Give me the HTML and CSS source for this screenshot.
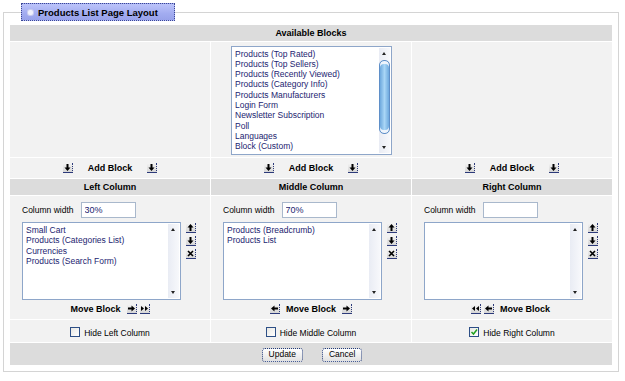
FILE: index.html
```html
<!DOCTYPE html>
<html lang="en">
    <head>
        <meta charset="UTF-8" />
        <title>Products List Page Layout</title>
        <link rel="stylesheet" href="styles.css">
    </head>
    <body>
        <fieldset class="layout-box">
            <legend><span class="bullet"></span>Products List Page Layout</legend>

            <div class="layout-grid">
                <!-- Available blocks -->
                <div class="head span-3">Available Blocks</div>
                <div class="cell"></div>
                <div class="cell avail">
                    <div class="listbox avail-list">
                        <div class="options">
                            <div>Products (Top Rated)</div>
                            <div>Products (Top Sellers)</div>
                            <div>Products (Recently Viewed)</div>
                            <div>Products (Category Info)</div>
                            <div>Products Manufacturers</div>
                            <div>Login Form</div>
                            <div>Newsletter Subscription</div>
                            <div>Poll</div>
                            <div>Languages</div>
                            <div>Block (Custom)</div>
                        </div>
                        <div class="scrollbar">
                            <span class="sb-btn sb-up"></span>
                            <span class="sb-track"><span class="sb-thumb"></span></span>
                            <span class="sb-btn sb-down"></span>
                        </div>
                    </div>
                </div>
                <div class="cell"></div>

                <!-- Add block row -->
                <div class="cell add-row">
                    <span class="ibtn"><svg viewBox="0 0 9 9"><path d="M3.5 1h2v3.5h2l-3 3.5-3-3.5h2z"/></svg></span>
                    <b>Add Block</b>
                    <span class="ibtn"><svg viewBox="0 0 9 9"><path d="M3.5 1h2v3.5h2l-3 3.5-3-3.5h2z"/></svg></span>
                </div>
                <div class="cell add-row">
                    <span class="ibtn"><svg viewBox="0 0 9 9"><path d="M3.5 1h2v3.5h2l-3 3.5-3-3.5h2z"/></svg></span>
                    <b>Add Block</b>
                    <span class="ibtn"><svg viewBox="0 0 9 9"><path d="M3.5 1h2v3.5h2l-3 3.5-3-3.5h2z"/></svg></span>
                </div>
                <div class="cell add-row">
                    <span class="ibtn"><svg viewBox="0 0 9 9"><path d="M3.5 1h2v3.5h2l-3 3.5-3-3.5h2z"/></svg></span>
                    <b>Add Block</b>
                    <span class="ibtn"><svg viewBox="0 0 9 9"><path d="M3.5 1h2v3.5h2l-3 3.5-3-3.5h2z"/></svg></span>
                </div>

                <!-- Column headers -->
                <div class="head">Left Column</div>
                <div class="head">Middle Column</div>
                <div class="head">Right Column</div>

                <!-- Left column -->
                <div class="cell column">
                    <div class="col-inner">
                        <div class="width-row">
                            <label>Column width</label>
                            <input type="text" class="width-input" value="30%">
                        </div>
                        <div class="list-row">
                            <div class="listbox col-list">
                                <div class="options">
                                    <div>Small Cart</div>
                                    <div>Products (Categories List)</div>
                                    <div>Currencies</div>
                                    <div>Products (Search Form)</div>
                                </div>
                                <div class="scrollbar">
                                    <span class="sb-btn sb-up"></span>
                                    <span class="sb-track"></span>
                                    <span class="sb-btn sb-down"></span>
                                </div>
                            </div>
                            <div class="side-btns">
                                <span class="ibtn"><svg viewBox="0 0 9 9"><path d="M4.5 1l3 3.5h-2V8h-2V4.5h-2z"/></svg></span>
                                <span class="ibtn"><svg viewBox="0 0 9 9"><path d="M3.5 1h2v3.5h2l-3 3.5-3-3.5h2z"/></svg></span>
                                <span class="ibtn"><svg viewBox="0 0 9 9"><path class="cross" d="M2 2l5 5M7 2l-5 5"/></svg></span>
                            </div>
                        </div>
                    </div>
                    <div class="move-row">
                        <b>Move Block</b>
                        <span class="ibtn"><svg viewBox="0 0 9 9"><path d="M1 3.5h3.5v-2l3.5 3-3.5 3v-2H1z"/></svg></span>
                        <span class="ibtn tight"><svg viewBox="0 0 9 9"><path d="M1 2l3 2.5L1 7zM5 2l3 2.5L5 7z"/></svg></span>
                    </div>
                </div>

                <!-- Middle column -->
                <div class="cell column">
                    <div class="col-inner">
                        <div class="width-row">
                            <label>Column width</label>
                            <input type="text" class="width-input" value="70%">
                        </div>
                        <div class="list-row">
                            <div class="listbox col-list">
                                <div class="options">
                                    <div>Products (Breadcrumb)</div>
                                    <div>Products List</div>
                                </div>
                                <div class="scrollbar">
                                    <span class="sb-btn sb-up"></span>
                                    <span class="sb-track"></span>
                                    <span class="sb-btn sb-down"></span>
                                </div>
                            </div>
                            <div class="side-btns">
                                <span class="ibtn"><svg viewBox="0 0 9 9"><path d="M4.5 1l3 3.5h-2V8h-2V4.5h-2z"/></svg></span>
                                <span class="ibtn"><svg viewBox="0 0 9 9"><path d="M3.5 1h2v3.5h2l-3 3.5-3-3.5h2z"/></svg></span>
                                <span class="ibtn"><svg viewBox="0 0 9 9"><path class="cross" d="M2 2l5 5M7 2l-5 5"/></svg></span>
                            </div>
                        </div>
                    </div>
                    <div class="move-row">
                        <span class="ibtn"><svg viewBox="0 0 9 9"><path d="M8 3.5H4.5v-2L1 4.5l3.5 3v-2H8z"/></svg></span>
                        <b>Move Block</b>
                        <span class="ibtn"><svg viewBox="0 0 9 9"><path d="M1 3.5h3.5v-2l3.5 3-3.5 3v-2H1z"/></svg></span>
                    </div>
                </div>

                <!-- Right column -->
                <div class="cell column">
                    <div class="col-inner">
                        <div class="width-row">
                            <label>Column width</label>
                            <input type="text" class="width-input" value="">
                        </div>
                        <div class="list-row">
                            <div class="listbox col-list">
                                <div class="options"></div>
                                <div class="scrollbar">
                                    <span class="sb-btn sb-up"></span>
                                    <span class="sb-track"></span>
                                    <span class="sb-btn sb-down"></span>
                                </div>
                            </div>
                            <div class="side-btns">
                                <span class="ibtn"><svg viewBox="0 0 9 9"><path d="M4.5 1l3 3.5h-2V8h-2V4.5h-2z"/></svg></span>
                                <span class="ibtn"><svg viewBox="0 0 9 9"><path d="M3.5 1h2v3.5h2l-3 3.5-3-3.5h2z"/></svg></span>
                                <span class="ibtn"><svg viewBox="0 0 9 9"><path class="cross" d="M2 2l5 5M7 2l-5 5"/></svg></span>
                            </div>
                        </div>
                    </div>
                    <div class="move-row">
                        <span class="ibtn tight"><svg viewBox="0 0 9 9"><path d="M4 2L1 4.5 4 7zM8 2L5 4.5 8 7z"/></svg></span>
                        <span class="ibtn"><svg viewBox="0 0 9 9"><path d="M8 3.5H4.5v-2L1 4.5l3.5 3v-2H8z"/></svg></span>
                        <b>Move Block</b>
                    </div>
                </div>

                <!-- Hide column checkboxes -->
                <div class="cell hide-row"><span class="check"></span>Hide Left Column</div>
                <div class="cell hide-row"><span class="check"></span>Hide Middle Column</div>
                <div class="cell hide-row">
                    <span class="check checked"><svg viewBox="0 0 8 8"><path d="M1.5 4l2 2 3.5-4.5"/></svg></span>Hide Right Column
                </div>

                <!-- Form buttons -->
                <div class="head span-3 footer">
                    <button class="form-btn">Update</button>
                    <button class="form-btn">Cancel</button>
                </div>
            </div>
        </fieldset>
    </body>
</html>
```

FILE: styles.css
```css
body {
    margin: 0;
    background: #fff;
    font-family: "Liberation Sans", Arial, sans-serif;
    font-size: 8.5px;
    color: #000;
}

.layout-box {
    width: 602px;
    margin: 3px 0 0 3px;
    padding: 4px 6px 6px 6px;
    border: 1px solid #d4d4d4;
}

.layout-box legend {
    display: flex;
    align-items: center;
    box-sizing: border-box;
    height: 18px;
    margin-left: 11px;
    padding: 0 16px 0 6px;
    border: 1px dotted #3b4796;
    background: linear-gradient(#bcc4fa, #a2acf0 60%, #98a2ea);
    font-size: 9.5px;
    font-weight: bold;
}

.bullet {
    width: 5px;
    height: 5px;
    margin-right: 5px;
    border-radius: 2px;
    background: #eef0fc;
    box-shadow: 0 0 0 1px #c8ccf0;
}

.layout-grid {
    display: grid;
    grid-template-columns: repeat(3, 1fr);
    grid-template-rows: 16px 115px 20px 16px 123px 22px 22px;
    gap: 1px;
}

.span-3 {
    grid-column: span 3;
}

.head {
    background: #dcdcdc;
    font-weight: bold;
    font-size: 9px;
    text-align: center;
    line-height: 16px;
}

.cell {
    background: #f2f2f2;
}

/* listboxes */
.avail {
    display: flex;
    justify-content: center;
    align-items: center;
    padding-left: 1px;
}

.listbox {
    display: flex;
    box-sizing: border-box;
    background: #fff;
    border: 1px solid #8ea6c9;
}

.avail-list {
    width: 161px;
    height: 109px;
    margin-top: 1px;
}

.col-list {
    width: 159px;
    height: 78px;
}

.options {
    flex: 1;
    padding: 2px 3px;
    color: #1c2470;
    line-height: 10.3px;
    white-space: nowrap;
}

.scrollbar {
    display: flex;
    flex-direction: column;
    width: 11px;
    margin: 1px 1px 1px 0;
    background: linear-gradient(to right, #e9ecf4, #f7f8fb);
}

.sb-btn {
    position: relative;
    height: 11px;
}

.sb-btn::after {
    content: "";
    position: absolute;
    left: 3px;
    top: 4px;
    border-left: 2.5px solid transparent;
    border-right: 2.5px solid transparent;
}

.sb-up::after {
    border-bottom: 3px solid #222;
}

.sb-down::after {
    border-top: 3px solid #222;
}

.sb-track {
    flex: 1;
    display: flex;
    flex-direction: column;
}

.sb-thumb {
    height: 72px;
    margin-top: 1px;
    border: 1px solid #5f8fc8;
    border-radius: 5px;
    background: linear-gradient(to right, #6ea9de, #a9d6f6 50%, #6ea9de);
    box-shadow: inset 0 3px 0 #eef4fc, inset 0 -3px 0 #eef4fc;
}

/* small icon buttons */
.ibtn {
    display: inline-flex;
    box-sizing: border-box;
    width: 10px;
    height: 10px;
    background: linear-gradient(#f4f4f4, #d6d6d6);
    border-right: 1px dotted #2c3a7a;
    border-bottom: 1px solid #2c3a7a;
}

.ibtn svg {
    width: 9px;
    height: 9px;
    fill: #000;
}

.ibtn .cross {
    fill: none;
    stroke: #000;
    stroke-width: 1.6;
}

.add-row {
    display: flex;
    justify-content: center;
    align-items: center;
    gap: 15px;
    font-size: 9px;
}

/* column cells */
.column {
    display: flex;
    flex-direction: column;
    align-items: center;
}

.col-inner {
    width: 177px;
    margin-top: 6px;
    padding-left: 1px;
}

.width-row {
    display: flex;
    align-items: center;
    gap: 7px;
}

.width-input {
    box-sizing: border-box;
    width: 55px;
    height: 16px;
    padding: 0 3px;
    border: 1px solid #a9b8cc;
    font: inherit;
    font-size: 9px;
    color: #1c2470;
}

.list-row {
    display: flex;
    gap: 5px;
    margin-top: 4px;
}

.side-btns {
    display: flex;
    flex-direction: column;
    gap: 3px;
    padding-top: 1px;
}

.move-row {
    display: flex;
    align-items: center;
    gap: 6px;
    margin-top: 4px;
    font-size: 9px;
}

.move-row .tight {
    margin-left: -3px;
    margin-right: -3px;
}

.move-row .ibtn + .tight {
    margin-right: 0;
}

/* hide checkboxes */
.hide-row {
    display: flex;
    justify-content: center;
    align-items: center;
    gap: 4px;
    padding-top: 4px;
}

.check {
    display: inline-flex;
    box-sizing: border-box;
    width: 10px;
    height: 10px;
    margin-top: -3px;
    background: linear-gradient(135deg, #e8e8e4, #fff);
    border: 1px solid #2d4f86;
}

.check svg {
    width: 8px;
    height: 8px;
    fill: none;
    stroke: #21a121;
    stroke-width: 1.5;
}

/* footer buttons */
.footer {
    display: flex;
    justify-content: center;
    align-items: center;
    gap: 19px;
    padding-left: 2px;
    padding-top: 1px;
}

.form-btn {
    height: 14px;
    padding: 0 6px;
    border: 1px dotted #223a78;
    border-radius: 3px;
    background: linear-gradient(#ffffff, #e2e2e2);
    font-family: inherit;
    font-size: 8.5px;
    font-weight: normal;
    line-height: 11px;
    color: #000;
}
```
